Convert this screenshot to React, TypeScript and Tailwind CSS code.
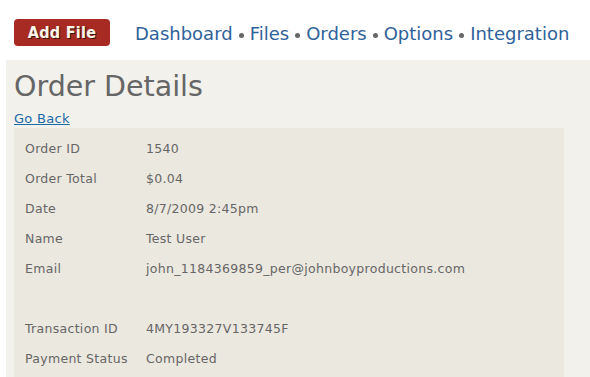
const rows: [string, string][] = [
  ["Order ID", "1540"],
  ["Order Total", "$0.04"],
  ["Date", "8/7/2009 2:45pm"],
  ["Name", "Test User"],
  ["Email", "john_1184369859_per@johnboyproductions.com"],
  ["", ""],
  ["Transaction ID", "4MY193327V133745F"],
  ["Payment Status", "Completed"],
];

const navItems = ["Dashboard", "Files", "Orders", "Options", "Integration"];

const Dot = () => <span className="inline-block w-[5px] h-[5px] rounded-full bg-[#666] mx-[6px] mt-[4px]" />;

export default function App() {
  return (
    <div className="w-[590px] h-[377px] overflow-hidden bg-white font-['DejaVu_Sans',sans-serif]">
      <div className="h-[60px] flex items-start pt-[19px] pl-[14px]">
        <button className="w-[96px] h-[27px] rounded-[4px] bg-[#a72b22] text-[#fdf6ea] text-[16px] font-bold leading-none tracking-[0.3px] font-['DejaVu_Sans_Condensed',sans-serif] [text-shadow:1px_1px_0_#3a1a10]">
          Add File
        </button>
        <nav className="ml-[25px] flex items-center h-[29px] text-[18px] text-[#30629a]">
          {navItems.map((item, i) => (
            <span key={item} className="flex items-center">
              {i > 0 && <Dot />}
              <a className="cursor-pointer">{item}</a>
            </span>
          ))}
        </nav>
      </div>
      <div className="ml-[6px] h-[317px] bg-[#f3f1ec] pl-[8px]">
        <h1 className="pt-[10px] text-[28.5px] leading-[34px] text-[#666]">Order Details</h1>
        <a className="block mt-[6px] text-[13px] leading-[18px] tracking-[0.3px] text-[#1a6aa6] underline cursor-pointer">Go Back</a>
        <div className="w-[550px] h-[260px] bg-[#ebe8df] pt-[6px] pl-[11px]">
          {rows.map(([label, value], i) => (
            <div key={i} className="flex h-[30px] items-center text-[12.5px] tracking-[0.3px] text-[#666]">
              <span className="w-[121px]">{label}</span>
              <span>{value}</span>
            </div>
          ))}
        </div>
      </div>
    </div>
  );
}
